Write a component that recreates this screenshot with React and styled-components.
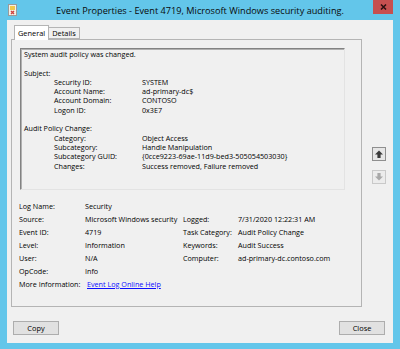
import React from "react";
import styled, { createGlobalStyle } from "styled-components";

const GlobalStyle = createGlobalStyle`
  html, body {
    margin: 0;
    padding: 0;
  }
  body {
    font-family: "Open Sans", "Noto Sans", sans-serif;
    color: #000;
  }
`;

const Frame = styled.div`
  width: 400px;
  height: 349px;
  box-sizing: border-box;
  background: #63c6ea;
  display: flex;
  flex-direction: column;
`;

const TitleBar = styled.div`
  height: 20px;
  flex: none;
  display: grid;
  grid-template-columns: 1fr auto 1fr;
  align-items: start;
`;

const TitleIcon = styled.svg`
  margin: 4px 0 0 8px;
  display: block;
`;

const TitleText = styled.div`
  font-size: 9.2px;
  line-height: 21px;
  color: #0a0a0a;
  white-space: nowrap;
`;

const CloseButton = styled.div`
  justify-self: end;
  margin-right: 7px;
  width: 20px;
  height: 14px;
  background: #c75050;
  display: flex;
  align-items: center;
  justify-content: center;
`;

const Client = styled.div`
  flex: 1;
  margin: 0 7px 6px 7px;
  background: #f0f0f0;
  padding: 5px 7px 0 4px;
  display: flex;
  flex-direction: column;
`;

const BodyRow = styled.div`
  display: flex;
  align-items: flex-start;
`;

const TabArea = styled.div`
  width: 351px;
  display: flex;
  flex-direction: column;
`;

const TabStrip = styled.div`
  height: 14px;
  padding-left: 3px;
  display: flex;
  align-items: flex-end;
  position: relative;
  z-index: 1;
`;

const Tab = styled.div`
  box-sizing: border-box;
  height: ${(p) => (p.$active ? "15px" : "12px")};
  margin-bottom: ${(p) => (p.$active ? "-1px" : "0")};
  padding: 0 3px;
  background: ${(p) => (p.$active ? "#ffffff" : "#f0f0f0")};
  border: 1px solid #b4b4b4;
  border-bottom: ${(p) => (p.$active ? "none" : "1px solid #b4b4b4")};
  border-left: ${(p) => (p.$active ? "1px solid #b4b4b4" : "none")};
  font-size: 7.4px;
  line-height: ${(p) => (p.$active ? "13px" : "10px")};
  display: flex;
  align-items: center;
`;

const Panel = styled.div`
  box-sizing: border-box;
  height: 268px;
  border: 1px solid #b4b4b4;
  background: #f0f0f0;
  padding: 8px 16px 0 8px;
  display: flex;
  flex-direction: column;
`;

const DescBox = styled.div`
  box-sizing: border-box;
  height: 142px;
  border: 1px solid;
  border-color: #828282 #e3e3e3 #e3e3e3 #828282;
  box-shadow: inset 1px 1px 0 #b0b0b0;
  padding: 1px 2px 0 3px;
  font-size: 7.2px;
  line-height: 9.3px;
`;

const DescLine = styled.div`
  height: 9.3px;
  white-space: nowrap;
  margin-bottom: ${(p) => (p.$gap ? "9.3px" : "0")};
`;

const DescRow = styled.div`
  display: grid;
  grid-template-columns: 88px 1fr;
  padding-left: 30px;
  height: 9.3px;
  white-space: nowrap;
`;

const DescGroup = styled.div`
  margin-bottom: 9.3px;
`;

const Fields = styled.div`
  margin: 9px 0 0 -1px;
  display: grid;
  grid-template-columns: 66px 98px 55px 1fr;
  grid-auto-rows: 13px;
  align-items: center;
  font-size: 7.2px;
  white-space: nowrap;
`;

const Link = styled.a`
  color: #0d0dff;
  text-decoration: underline;
  margin-left: 2px;
  cursor: pointer;
`;

const SideButtons = styled.div`
  margin: 122px 0 0 10px;
  display: flex;
  flex-direction: column;
  gap: 9px;
`;

const ArrowButton = styled.div`
  box-sizing: border-box;
  width: 14px;
  height: 14px;
  border: 1px solid ${(p) => (p.$disabled ? "#c9c9c9" : "#8f8f8f")};
  background: ${(p) => (p.$disabled ? "#ececec" : "#e6e6e6")};
  display: flex;
  align-items: center;
  justify-content: center;
`;

const Footer = styled.div`
  margin-top: 14px;
  padding: 0 1px 0 2px;
  display: flex;
  justify-content: space-between;
`;

const Button = styled.div`
  box-sizing: border-box;
  width: 46px;
  height: 14px;
  border: 1px solid #adadad;
  background: #e1e1e1;
  font-size: 7.4px;
  display: flex;
  align-items: center;
  justify-content: center;
`;

function Arrow({ down, color }) {
  return (
    <svg width="8" height="8" viewBox="0 0 8 8">
      <polygon
        points="4,0.5 8,4.5 5.6,4.5 5.6,8 2.4,8 2.4,4.5 0,4.5"
        fill={color}
        transform={down ? "rotate(180 4 4)" : undefined}
      />
    </svg>
  );
}

const subject = [
  ["Security ID:", "SYSTEM"],
  ["Account Name:", "ad-primary-dc$"],
  ["Account Domain:", "CONTOSO"],
  ["Logon ID:", "0x3E7"],
];

const policy = [
  ["Category:", "Object Access"],
  ["Subcategory:", "Handle Manipulation"],
  ["Subcategory GUID:", "{0cce9223-69ae-11d9-bed3-505054503030}"],
  ["Changes:", "Success removed, Failure removed"],
];

export default function App() {
  return (
    <>
      <GlobalStyle />
      <Frame>
        <TitleBar>
          <TitleIcon width="9" height="12" viewBox="0 0 9 12">
            <rect x="0.5" y="0.5" width="8" height="11" fill="#f4f0e6" stroke="#9a9a9a" />
            <rect x="2" y="2" width="5" height="4" fill="#f2c94c" />
            <path d="M3 7 L6 10 M6 7 L3 10" stroke="#d04040" strokeWidth="1.4" />
          </TitleIcon>
          <TitleText>Event Properties - Event 4719, Microsoft Windows security auditing.</TitleText>
          <CloseButton>
            <svg width="7" height="6" viewBox="0 0 7 6">
              <path d="M1 0.5 L6 5.5 M6 0.5 L1 5.5" stroke="#2a1010" strokeWidth="1.5" />
            </svg>
          </CloseButton>
        </TitleBar>
        <Client>
          <BodyRow>
            <TabArea>
              <TabStrip>
                <Tab $active>General</Tab>
                <Tab>Details</Tab>
              </TabStrip>
              <Panel>
                <DescBox>
                  <DescLine $gap>System audit policy was changed.</DescLine>
                  <DescLine>Subject:</DescLine>
                  <DescGroup>
                    {subject.map(([k, v]) => (
                      <DescRow key={k}>
                        <span>{k}</span>
                        <span>{v}</span>
                      </DescRow>
                    ))}
                  </DescGroup>
                  <DescLine>Audit Policy Change:</DescLine>
                  <div>
                    {policy.map(([k, v]) => (
                      <DescRow key={k}>
                        <span>{k}</span>
                        <span>{v}</span>
                      </DescRow>
                    ))}
                  </div>
                </DescBox>
                <Fields>
                  <span>Log Name:</span>
                  <span>Security</span>
                  <span />
                  <span />
                  <span>Source:</span>
                  <span>Microsoft Windows security</span>
                  <span>Logged:</span>
                  <span>7/31/2020 12:22:31 AM</span>
                  <span>Event ID:</span>
                  <span>4719</span>
                  <span>Task Category:</span>
                  <span>Audit Policy Change</span>
                  <span>Level:</span>
                  <span>Information</span>
                  <span>Keywords:</span>
                  <span>Audit Success</span>
                  <span>User:</span>
                  <span>N/A</span>
                  <span>Computer:</span>
                  <span>ad-primary-dc.contoso.com</span>
                  <span>OpCode:</span>
                  <span>Info</span>
                  <span />
                  <span />
                  <span>More Information:</span>
                  <span>
                    <Link>Event Log Online Help</Link>
                  </span>
                </Fields>
              </Panel>
            </TabArea>
            <SideButtons>
              <ArrowButton>
                <Arrow color="#3a3a3a" />
              </ArrowButton>
              <ArrowButton $disabled>
                <Arrow down color="#a8a8a8" />
              </ArrowButton>
            </SideButtons>
          </BodyRow>
          <Footer>
            <Button>Copy</Button>
            <Button>Close</Button>
          </Footer>
        </Client>
      </Frame>
    </>
  );
}
